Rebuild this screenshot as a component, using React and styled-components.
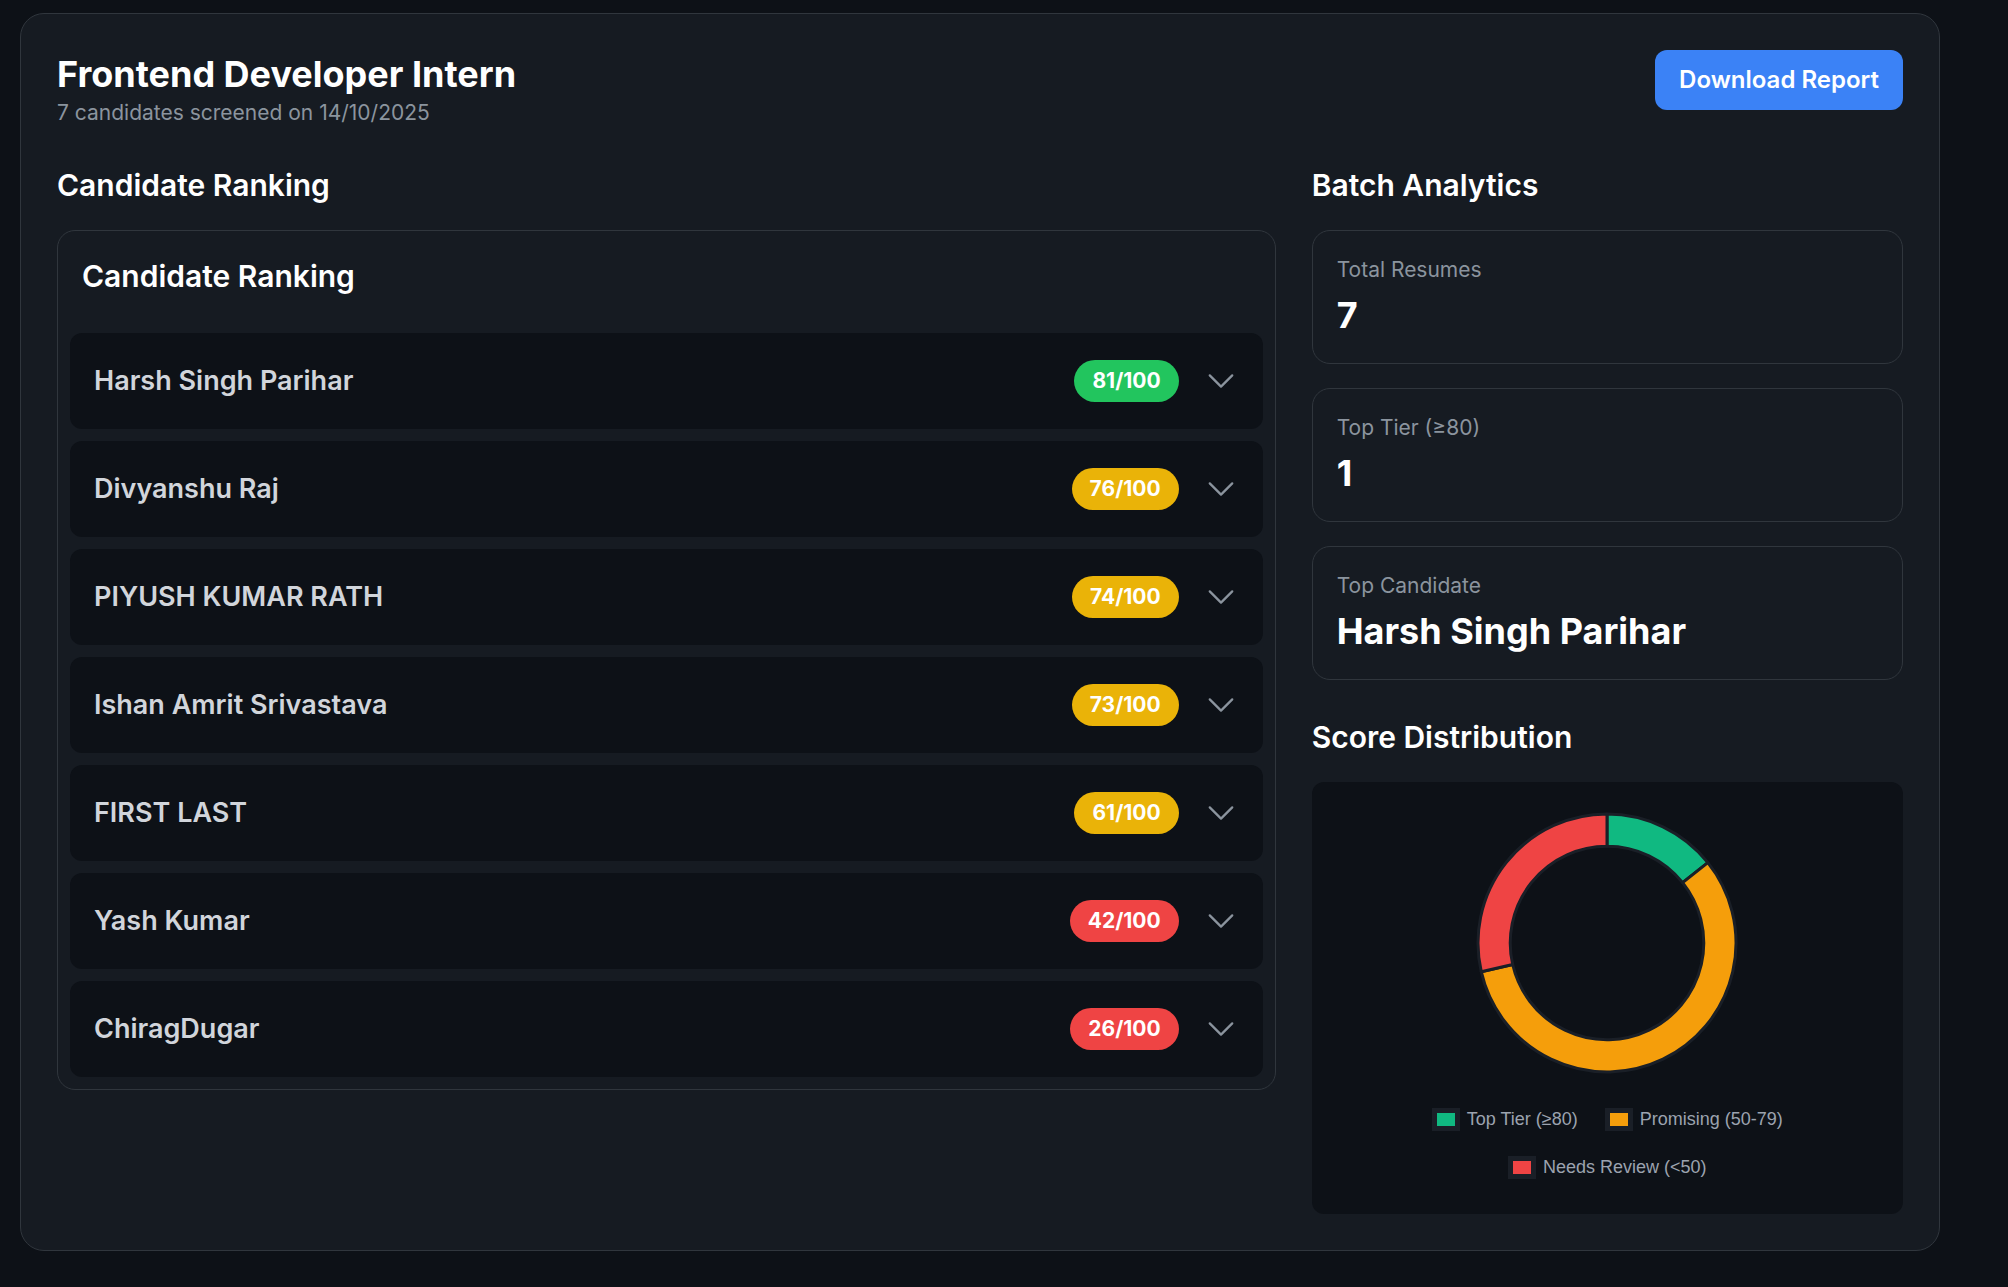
import React from 'react';
import styled, { createGlobalStyle } from 'styled-components';

const GlobalStyle = createGlobalStyle`
    html, body {
        margin: 0;
        padding: 0;
        background: #0d1117;
    }
    body {
        font-family: Inter, "Noto Sans", sans-serif;
        color: #ffffff;
    }
    * {
        box-sizing: border-box;
    }
`;

const Page = styled.div`
    min-height: 100vh;
    padding: 13px 0 0 20px;
`;

const Report = styled.div`
    width: 1920px;
    background: #161b22;
    border: 1px solid #30363d;
    border-radius: 24px;
    padding: 36px;
`;

const Header = styled.div`
    display: flex;
    justify-content: space-between;
    align-items: flex-start;
    margin-bottom: 36px;
`;

const Title = styled.h1`
    margin: 0;
    font-size: 36px;
    line-height: 48px;
    font-weight: 700;
    color: #ffffff;
`;

const Subtitle = styled.p`
    margin: 0;
    font-size: 21px;
    line-height: 30px;
    color: #8b949e;
`;

const DownloadButton = styled.button`
    font-family: inherit;
    font-size: 24px;
    line-height: 36px;
    font-weight: 600;
    color: #ffffff;
    background: #3b82f6;
    border: none;
    border-radius: 12px;
    padding: 12px 24px;
    cursor: pointer;
`;

const Columns = styled.div`
    display: grid;
    grid-template-columns: repeat(3, 1fr);
    gap: 36px;
`;

const Column = styled.div`
    grid-column: span ${(p) => p.$span || 1};
    display: flex;
    flex-direction: column;
`;

const SectionTitle = styled.h2`
    margin: ${(p) => (p.$spaced ? '36px' : '0')} 0 24px;
    font-size: 30px;
    line-height: 42px;
    font-weight: 600;
    color: #ffffff;
`;

const RankingCard = styled.div`
    border: 1px solid #30363d;
    border-radius: 18px;
    padding: 12px;
`;

const RankingTitle = styled.h3`
    margin: 0 0 24px;
    padding: 12px;
    font-size: 30px;
    line-height: 42px;
    font-weight: 600;
    color: #ffffff;
`;

const RankList = styled.div`
    display: flex;
    flex-direction: column;
    gap: 12px;
`;

const RankRow = styled.div`
    height: 96px;
    display: flex;
    align-items: center;
    justify-content: space-between;
    padding: 0 24px;
    background: #0d1117;
    border-radius: 12px;
`;

const CandidateName = styled.span`
    font-size: 27px;
    line-height: 42px;
    font-weight: 600;
    color: #d1d5db;
`;

const RowActions = styled.div`
    display: flex;
    align-items: center;
    gap: 24px;
`;

const ScoreBadge = styled.span`
    font-size: 21px;
    line-height: 30px;
    font-weight: 700;
    color: #ffffff;
    padding: 6px 18px;
    border-radius: 999px;
    background: ${(p) => p.$color};
`;

const Chevron = styled.svg`
    width: 36px;
    height: 36px;
    color: #8b949e;
    display: block;
`;

const StatList = styled.div`
    display: flex;
    flex-direction: column;
    gap: 24px;
`;

const StatCard = styled.div`
    border: 1px solid #30363d;
    border-radius: 18px;
    padding: 24px;
`;

const StatLabel = styled.div`
    font-size: 21px;
    line-height: 30px;
    color: #8b949e;
`;

const StatValue = styled.div`
    margin-top: 6px;
    font-size: 36px;
    line-height: 48px;
    font-weight: 700;
    color: #ffffff;
`;

const ChartBox = styled.div`
    background: #0d1117;
    border-radius: 12px;
    padding: 24px 24px 35px;
`;

const DonutWrap = styled.div`
    height: 273px;
    display: flex;
    align-items: center;
    justify-content: center;
`;

const Legend = styled.div`
    margin-top: 29px;
    display: flex;
    flex-wrap: wrap;
    justify-content: center;
    column-gap: 27px;
    row-gap: 25px;
`;

const LegendItem = styled.div`
    display: flex;
    align-items: center;
    gap: 7px;
    font-family: "Liberation Sans", Arial, sans-serif;
    font-size: 18px;
    line-height: 23px;
    color: #9ca3af;
`;

const Swatch = styled.span`
    width: 28px;
    height: 23px;
    border: 5px solid #1a1f27;
    background: ${(p) => p.$color};
`;

const scoreColor = (s) => (s >= 80 ? '#22c55e' : s >= 50 ? '#eab308' : '#ef4444');

const candidates = [
    { name: 'Harsh Singh Parihar', score: 81 },
    { name: 'Divyanshu Raj', score: 76 },
    { name: 'PIYUSH KUMAR RATH', score: 74 },
    { name: 'Ishan Amrit Srivastava', score: 73 },
    { name: 'FIRST LAST', score: 61 },
    { name: 'Yash Kumar', score: 42 },
    { name: 'ChiragDugar', score: 26 },
];

const segments = [
    { label: 'Top Tier (≥80)', value: 1, color: '#10b981' },
    { label: 'Promising (50-79)', value: 4, color: '#f59e0b' },
    { label: 'Needs Review (<50)', value: 2, color: '#ef4444' },
];

function sectorPath(cx, cy, R, r, a0, a1) {
    const pt = (rad, a) => [cx + rad * Math.sin(a), cy - rad * Math.cos(a)];
    const large = a1 - a0 > Math.PI ? 1 : 0;
    const [x0, y0] = pt(R, a0);
    const [x1, y1] = pt(R, a1);
    const [x2, y2] = pt(r, a1);
    const [x3, y3] = pt(r, a0);
    return `M${x0} ${y0} A${R} ${R} 0 ${large} 1 ${x1} ${y1} L${x2} ${y2} A${r} ${r} 0 ${large} 0 ${x3} ${y3} Z`;
}

function Donut() {
    const total = segments.reduce((s, d) => s + d.value, 0);
    let angle = 0;
    return (
        <svg width="264" height="264" viewBox="0 0 264 264">
            {segments.map((seg) => {
                const a0 = angle;
                const a1 = angle + (seg.value / total) * Math.PI * 2;
                angle = a1;
                return (
                    <path
                        key={seg.label}
                        d={sectorPath(132, 132, 129, 96.75, a0, a1)}
                        fill={seg.color}
                        stroke="#1a1f27"
                        strokeWidth="3"
                        strokeLinejoin="round"
                    />
                );
            })}
        </svg>
    );
}

export default function App() {
    return (
        <Page>
            <GlobalStyle />
            <Report>
                <Header>
                    <div>
                        <Title>Frontend Developer Intern</Title>
                        <Subtitle>7 candidates screened on 14/10/2025</Subtitle>
                    </div>
                    <DownloadButton>Download Report</DownloadButton>
                </Header>
                <Columns>
                    <Column $span={2}>
                        <SectionTitle>Candidate Ranking</SectionTitle>
                        <RankingCard>
                            <RankingTitle>Candidate Ranking</RankingTitle>
                            <RankList>
                                {candidates.map((c) => (
                                    <RankRow key={c.name}>
                                        <CandidateName>{c.name}</CandidateName>
                                        <RowActions>
                                            <ScoreBadge $color={scoreColor(c.score)}>{c.score}/100</ScoreBadge>
                                            <Chevron viewBox="0 0 24 24" fill="none" stroke="currentColor" strokeWidth="1.5">
                                                <path strokeLinecap="round" strokeLinejoin="round" d="m19.5 8.25-7.5 7.5-7.5-7.5" />
                                            </Chevron>
                                        </RowActions>
                                    </RankRow>
                                ))}
                            </RankList>
                        </RankingCard>
                    </Column>
                    <Column>
                        <SectionTitle>Batch Analytics</SectionTitle>
                        <StatList>
                            <StatCard>
                                <StatLabel>Total Resumes</StatLabel>
                                <StatValue>7</StatValue>
                            </StatCard>
                            <StatCard>
                                <StatLabel>Top Tier (≥80)</StatLabel>
                                <StatValue>1</StatValue>
                            </StatCard>
                            <StatCard>
                                <StatLabel>Top Candidate</StatLabel>
                                <StatValue>Harsh Singh Parihar</StatValue>
                            </StatCard>
                        </StatList>
                        <SectionTitle $spaced>Score Distribution</SectionTitle>
                        <ChartBox>
                            <DonutWrap>
                                <Donut />
                            </DonutWrap>
                            <Legend>
                                {segments.map((seg) => (
                                    <LegendItem key={seg.label}>
                                        <Swatch $color={seg.color} />
                                        {seg.label}
                                    </LegendItem>
                                ))}
                            </Legend>
                        </ChartBox>
                    </Column>
                </Columns>
            </Report>
        </Page>
    );
}
